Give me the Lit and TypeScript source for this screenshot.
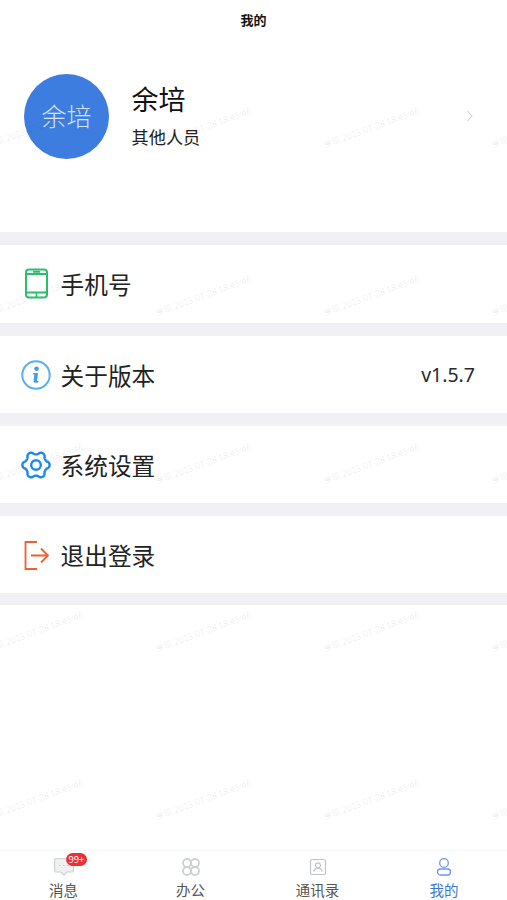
import { LitElement, html, css, svg } from "lit";
import { customElement } from "lit/decorators.js";

// Six rounded lobes, with a lobe pointing left and right and a notch at top and bottom.
const gearPath = (() => {
  const pts: string[] = [];
  for (let i = 0; i < 144; i++) {
    const a = (i / 144) * Math.PI * 2;
    const wave = Math.cos(6 * a);
    const r = 12.1 + 1.5 * Math.sign(wave) * Math.pow(Math.abs(wave), 0.7);
    pts.push(`${(15 + r * Math.cos(a)).toFixed(2)} ${(16 + r * Math.sin(a)).toFixed(2)}`);
  }
  return `M${pts.join("L")}Z`;
})();

const phone = svg`<svg class="ic" width="30" height="32" viewBox="0 0 30 32" fill="none" stroke="#2dbd6e" stroke-width="2"><rect x="5" y="1.500" width="21" height="28" rx="3"/><path d="M5.500 6h20M5.500 24.500h20M12 3.700h7" /><path d="M15.500 25v4" stroke-width="1.600"/></svg>`;
const info = svg`<svg class="ic" width="30" height="32" viewBox="0 0 30 32" fill="none"><circle cx="15" cy="16" r="13.700" stroke="#5ab0ee" stroke-width="2"/><circle cx="15.600" cy="9.800" r="2.300" fill="#3f9fe8"/><path d="M12.300 14h4.700l-.9 7.300c-.1.700.4.900 1.500.5l-.2 1.500c-2.700 1-5 .7-4.800-1.500l.7-6.200h-1.100z" fill="#3f9fe8"/></svg>`;
const gear = svg`<svg class="ic" width="30" height="32" viewBox="0 0 30 32" fill="none" stroke="#1e88f0" stroke-width="2.400" stroke-linejoin="round"><path d="${gearPath}"/><circle cx="15" cy="16" r="4.800"/></svg>`;
const logout = svg`<svg class="ic" width="30" height="32" viewBox="0 0 30 32" fill="none" stroke="#f0602e" stroke-width="1.800"><path d="M16 3H4.500v27H16"/><path d="M10 16.500h17M20 9.500l7 7-7 7"/></svg>`;
const tabMsg = svg`<svg width="22" height="20" viewBox="0 0 22 20" fill="#eef0f2" stroke="#ced1d6" stroke-width="1.200"><path d="M3 1.500h16a1.500 1.500 0 0 1 1.500 1.500v10.500a1.500 1.500 0 0 1-1.500 1.500h-5l-3 3.200-3-3.200H3a1.500 1.500 0 0 1-1.500-1.500V3A1.500 1.500 0 0 1 3 1.500z"/><path d="M6.500 8.500h.8M10.500 8.500h.8M14.500 8.500h.8" stroke="#9ca1a8"/></svg>`;
const tabWork = svg`<svg width="20" height="20" viewBox="0 0 20 20" fill="none" stroke="#cdd0d5" stroke-width="1.800"><circle cx="6" cy="6" r="4"/><circle cx="14" cy="6" r="4"/><circle cx="6" cy="14" r="4"/><circle cx="14" cy="14" r="4"/></svg>`;
const tabBook = svg`<svg width="18" height="18" viewBox="0 0 18 18" fill="none" stroke="#c0c3c8" stroke-width="1.200"><rect x="1.500" y="1.500" width="15" height="15" rx="1.500"/><circle cx="9" cy="7.300" r="2.500"/><path d="M4.800 13.500c.6-2.300 2.200-3.300 4.200-3.300s3.600 1 4.200 3.300"/></svg>`;
const tabMe = svg`<svg width="18" height="20" viewBox="0 0 18 20" fill="none" stroke-width="1.300"><circle cx="9" cy="6" r="4.300" stroke="#6f96ea"/><rect x="2.500" y="12" width="13" height="6" rx="3" stroke="#6f96ea"/></svg>`;

const rows = [
  { icon: phone, label: "手机号", value: "" },
  { icon: info, label: "关于版本", value: "v1.5.7" },
  { icon: gear, label: "系统设置", value: "" },
  { icon: logout, label: "退出登录", value: "" },
];
const tabs = [
  { icon: tabMsg, label: "消息", badge: "99+", active: false },
  { icon: tabWork, label: "办公", badge: "", active: false },
  { icon: tabBook, label: "通讯录", badge: "", active: false },
  { icon: tabMe, label: "我的", badge: "", active: true },
];

@customElement("app-root")
export class AppRoot extends LitElement {
  static styles = css`
    :host {
      display: block;
      width: 507px;
      height: 900px;
      position: relative;
      overflow: hidden;
      background: #fff;
      font-family: "Noto Sans CJK SC", "Noto Sans", sans-serif;
      color: #1c1c1c;
    }
    .page { display: flex; flex-direction: column; height: 900px; }
    .title {
      height: 40px;
      padding-bottom: 2px;
      box-sizing: border-box;
      display: flex;
      align-items: center;
      justify-content: center;
      font-size: 13px;
      font-weight: 700;
      color: #111;
    }
    .profile {
      height: 192px;
      box-sizing: border-box;
      padding: 34px 33px 0 24px;
      display: flex;
      align-items: flex-start;
    }
    .avatar {
      width: 85px;
      height: 85px;
      flex: none;
      border-radius: 50%;
      background: #3d7de0;
      color: #d5e3f8;
      font-size: 25px;
      font-weight: 300;
      display: flex;
      align-items: center;
      justify-content: center;
      line-height: 1;
      padding-bottom: 2px;
      box-sizing: border-box;
    }
    .who { flex: 1; padding-top: 5px; margin-left: 22.500px; }
    .name { font-size: 27px; line-height: 40px; color: #111; }
    .role { font-size: 17.200px; line-height: 25px; margin-top: 5px; color: #222; }
    .chev { margin-top: 36px; }
    .list { display: flex; flex-direction: column; }
    .row {
      height: 78px;
      border-top: 13px solid #f1f1f5;
      display: flex;
      align-items: center;
      padding: 0 32px 0 21px;
      background: #fff;
    }
    .row:nth-child(n + 2) { height: 77px; }
    .ic { flex: none; display: block; }
    .label { margin-left: 9.500px; flex: 1; font-size: 23.700px; line-height: 32px; color: #222; }
    .value { font-size: 19.500px; font-family: "Noto Sans", sans-serif; color: #2a2a2a; }
    .end { height: 12px; background: #f1f1f5; }
    .spacer { flex: 1; }
    .tabs {
      height: 49px;
      border-top: 1px solid #f5f6f7;
      display: grid;
      grid-template-columns: 127px 127px 127px 126px;
    }
    .tab {
      display: flex;
      flex-direction: column;
      align-items: center;
      font-size: 14.500px;
      line-height: 20px;
      color: #555;
    }
    .tab.on { color: #3a78d8; }
    .tabicon { height: 29px; display: flex; align-items: center; justify-content: center; position: relative; padding-top: 3px; box-sizing: border-box; }
    .badge {
      position: absolute;
      left: 13px;
      top: 2px;
      height: 13px;
      padding: 0 3px;
      border-radius: 6.500px;
      background: #ef2f34;
      color: #fff;
      font-size: 9.500px;
      line-height: 13px;
      white-space: nowrap;
    }
    .marks {
      position: absolute;
      left: -49px;
      top: 43px;
      display: grid;
      grid-template-columns: repeat(4, 168px);
      grid-auto-rows: 168px;
      pointer-events: none;
    }
    .mark {
      display: flex;
      align-items: center;
      justify-content: center;
      font-size: 8.800px;
      color: rgba(0, 0, 0, 0.09);
      white-space: nowrap;
      transform: rotate(-20deg);
    }
  `;

  render() {
    const marks = Array.from({ length: 20 });
    return html`
      <div class="page">
        <div class="title">我的</div>
        <div class="profile">
          <div class="avatar">余培</div>
          <div class="who">
            <div class="name">余培</div>
            <div class="role">其他人员</div>
          </div>
          <svg class="chev" width="8" height="12" viewBox="0 0 8 12" fill="none" stroke="#cfcfd3" stroke-width="1.100"><path d="M1.500 1l4.500 5-4.500 5"/></svg>
        </div>
        <div class="list">
          ${rows.map(
            (r) => html`<div class="row">
              ${r.icon}
              <span class="label">${r.label}</span>
              ${r.value ? html`<span class="value">${r.value}</span>` : ""}
            </div>`
          )}
          <div class="end"></div>
        </div>
        <div class="spacer"></div>
        <div class="tabs">
          ${tabs.map(
            (t) => html`<div class="tab ${t.active ? "on" : ""}">
              <div class="tabicon">
                ${t.icon}
                ${t.badge ? html`<span class="badge">${t.badge}</span>` : ""}
              </div>
              <div>${t.label}</div>
            </div>`
          )}
        </div>
      </div>
      <div class="marks">
        ${marks.map(() => html`<div class="mark">余培 2023-07-28 18:49:46</div>`)}
      </div>
    `;
  }
}
